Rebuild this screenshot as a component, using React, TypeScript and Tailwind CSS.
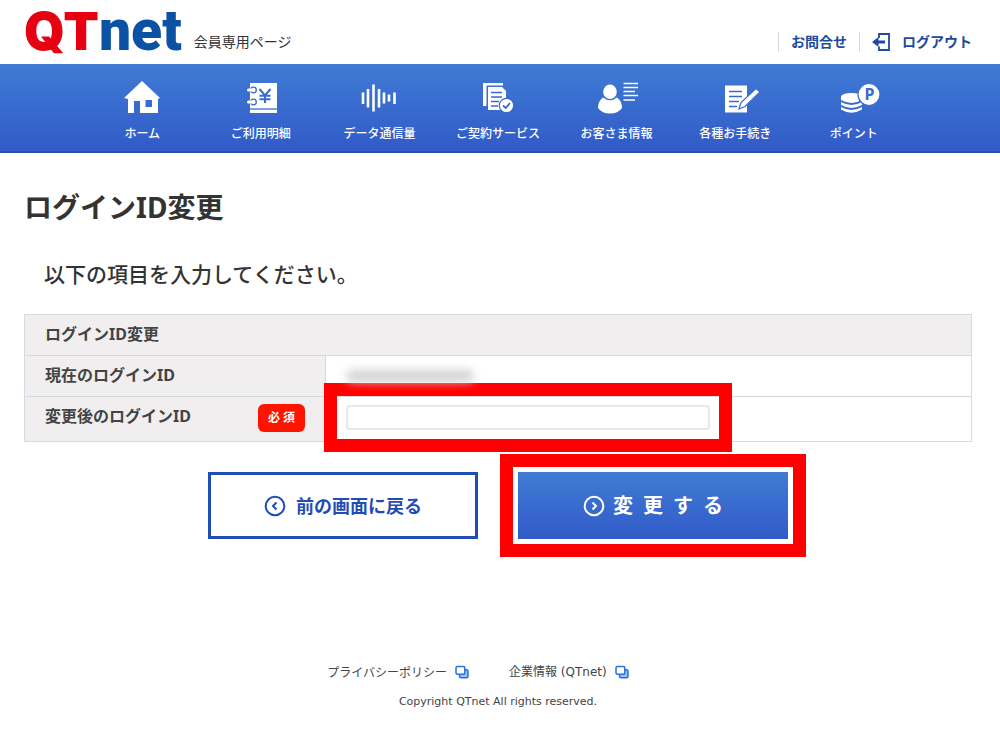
import type { ReactNode } from 'react'

type NavItem = {
    label: string
    icon: ReactNode
}

const navItems: NavItem[] = [
    {
        label: 'ホーム',
        icon: (
            <path
                fillRule="evenodd"
                d="M20 0 L38 17 L36 18 V32 H18 V20 H12 V32 H6 V18 L2 17 Z M23.5 19 V26 H30 V19 Z"
            />
        )
    },
    {
        label: 'ご利用明細',
        icon: (
            <>
                <path d="M9 2 H36 V32 H9 Z" />
                <path d="M9 28 H36" stroke="#7f9fe0" strokeWidth="2" />
                <path
                    d="M18.500 8 L24 14.500 L29.500 8 M24 14.500 V22 M18.500 14.800 H29.500 M18.500 18.300 H29.500"
                    fill="none"
                    stroke="#3b69cc"
                    strokeWidth="2"
                />
                <g stroke="#3b69cc" strokeWidth="1.300">
                    <circle cx="12.500" cy="9" r="2.800" />
                    <circle cx="12.500" cy="21" r="2.800" />
                </g>
                <path
                    d="M12 9 H7.500 M12 21 H7.500"
                    stroke="white"
                    strokeWidth="3"
                    strokeLinecap="round"
                />
            </>
        )
    },
    {
        label: 'データ通信量',
        icon: (
            <path
                d="M4 11.500 V23 M9 8 V26.500 M14.500 3.500 V30.500 M20 8 V26.500 M25 11.500 V22.500 M30 13.500 V20.500 M35.500 11.500 V23"
                stroke="white"
                strokeWidth="2.600"
            />
        )
    },
    {
        label: 'ご契約サービス',
        icon: (
            <>
                <path d="M5 2 H25 V4.500 H8.500 V25 H5 Z" />
                <path d="M10 6 H24 L28 10 V29 H10 Z" />
                <path
                    d="M13 11.500 H24 M13 16 H24 M13 20.500 H21 M13 25 H20"
                    stroke="#3b69cc"
                    strokeWidth="1.500"
                />
                <circle
                    cx="28.500"
                    cy="24.500"
                    r="7.200"
                    stroke="#3a67cb"
                    strokeWidth="1.200"
                />
                <path
                    d="M25 24.500 L27.800 27 L32 22"
                    fill="none"
                    stroke="#3a67cb"
                    strokeWidth="1.800"
                />
            </>
        )
    },
    {
        label: 'お客さま情報',
        icon: (
            <>
                <ellipse cx="13" cy="10.800" rx="6.800" ry="7.200" />
                <path d="M6 16.500 Q13 22 20 16.500 Q25 20 25 27 Q21 32.500 13 32.500 Q5 32.500 1 27 Q1 20 6 16.500 Z" />
                <path
                    d="M26.500 2.500 H41 M26.500 6.500 H41 M26.500 10.500 H38 M26.500 14.500 H41 M26.500 19 H38"
                    stroke="white"
                    strokeWidth="1.700"
                />
            </>
        )
    },
    {
        label: '各種お手続き',
        icon: (
            <>
                <path d="M10 4.500 H32 V31.500 H10 Z" />
                <path
                    d="M14 10.500 H27 M14 15.500 H27 M14 20.500 H24 M14 25.500 H22"
                    stroke="#3b69cc"
                    strokeWidth="1.500"
                />
                <path
                    d="M24 28 L26 21.500 L41 7.500 L45 11 L30 25.500 Z"
                    stroke="#3b69cc"
                    strokeWidth="1.200"
                />
            </>
        )
    },
    {
        label: 'ポイント',
        icon: (
            <>
                <ellipse cx="17.500" cy="15.500" rx="10.500" ry="3.500" />
                <path d="M7 15.500 V19 Q17.500 25 28 19 V15.500 Z" />
                <path d="M7 21 V24 Q17.500 30 28 24 V21 Q17.500 27 7 21 Z" />
                <path d="M7 26 V28.500 Q17.500 35 28 28.500 V26 Q17.500 32 7 26 Z" />
                <circle
                    cx="35"
                    cy="13.500"
                    r="11"
                    stroke="#3d70ce"
                    strokeWidth="1.200"
                />
                <text
                    x="35.500"
                    y="19"
                    textAnchor="middle"
                    fill="#3b69cc"
                    className="font-['Noto_Sans',sans-serif] text-base font-bold"
                >
                    P
                </text>
            </>
        )
    }
]

function LogoutIcon() {
    return (
        <svg viewBox="0 0 18 18" className="h-[18px] w-[18px]" fill="none">
            <path
                d="M7 5 V1 H17 V17 H7 V13.500"
                stroke="#1c4a9c"
                strokeWidth="1.800"
            />
            <path d="M0 9 L6.500 4 V7.500 H13 V10.500 H6.500 V14 Z" fill="#1c4a9c" />
        </svg>
    )
}

function CircleArrow({ direction }: { direction: 'left' | 'right' }) {
    return (
        <svg
            viewBox="0 0 22 22"
            className="h-[22px] w-[22px]"
            fill="none"
            stroke="currentColor"
            strokeWidth="2"
        >
            <circle cx="11" cy="11" r="9.300" />
            <path
                d={direction === 'left' ? 'M12.500 7.500 L9 11 L12.500 14.500' : 'M9.500 7.500 L13 11 L9.500 14.500'}
            />
        </svg>
    )
}

function NewWindowIcon() {
    return (
        <svg
            viewBox="0 0 14 14"
            className="h-3.5 w-3.5"
            stroke="#2a6fd6"
            strokeWidth="1.500"
            fill="white"
        >
            <rect x="4.500" y="4.800" width="8.500" height="8" rx="1.500" fill="#9cc0f2" />
            <rect x="1" y="1.500" width="8.800" height="7.800" rx="1.500" />
        </svg>
    )
}

export default function App() {
    return (
        <div className="min-h-screen bg-white font-['Noto_Sans','Noto_Sans_CJK_JP',sans-serif] text-[#333]">
            <header className="flex items-start justify-between pt-1 pr-7 pl-6">
                <div className="flex h-[60px] items-start gap-3">
                    <a
                        href="#"
                        className="font-['Roboto',sans-serif] text-[57px] leading-[54px] font-black text-[#0b52a5]"
                    >
                        <span className="font-['Inter',sans-serif] text-[52px] text-[#e60012]">
                            QT
                        </span>
                        net
                    </a>
                    <p className="pt-7 text-sm">会員専用ページ</p>
                </div>
                <div className="flex items-center pt-7 text-sm font-bold text-[#1c4a9c]">
                    <a
                        href="#"
                        className="border-x border-[#d5d8df] px-3"
                    >
                        お問合せ
                    </a>
                    <a href="#" className="flex items-center gap-3 pl-3">
                        <LogoutIcon />
                        ログアウト
                    </a>
                </div>
            </header>

            <nav className="border-b-2 border-[#2a4fb4] bg-linear-to-b from-[#407bd4] to-[#325ac8] pr-1">
                <ul className="mx-auto grid max-w-[830px] grid-cols-7 pt-[17px] pb-[9px]">
                    {navItems.map((item) => (
                        <li key={item.label}>
                            <a
                                href="#"
                                className="flex flex-col items-center gap-[13px] text-xs leading-4 font-medium whitespace-nowrap text-white"
                            >
                                <svg
                                    viewBox="0 0 40 32"
                                    className="h-8 w-10 overflow-visible"
                                    fill="white"
                                >
                                    {item.icon}
                                </svg>
                                {item.label}
                            </a>
                        </li>
                    ))}
                </ul>
            </nav>

            <main className="pr-7 pl-6">
                <h1 className="pt-[38px] text-[28px] leading-8 font-bold">
                    ログインID変更
                </h1>
                <p className="mt-[37px] pl-5 text-[21px] leading-7 font-medium">
                    以下の項目を入力してください。
                </p>

                <form>
                    <table className="mt-[26px] w-full table-fixed border-collapse border border-[#d5d9e1] text-left text-base leading-6 text-[#444]">
                        <colgroup>
                            <col className="w-[301px]" />
                            <col />
                        </colgroup>
                        <thead>
                            <tr>
                                <th
                                    colSpan={2}
                                    className="border border-[#d5d9e1] bg-[#f0eeef] px-5 pt-[7px] pb-[9px] font-bold"
                                >
                                    ログインID変更
                                </th>
                            </tr>
                        </thead>
                        <tbody>
                            <tr>
                                <th className="border border-[#d5d9e1] bg-[#f0eeef] px-5 pt-[7px] pb-[9px] font-bold">
                                    現在のログインID
                                </th>
                                <td className="border border-[#d5d9e1] px-5">
                                    <div className="h-3 w-32 rounded-full bg-[#d2d2d2] blur-[5px]" />
                                </td>
                            </tr>
                            <tr>
                                <th className="border border-[#d5d9e1] bg-[#f0eeef] px-5 pt-[7px] pb-[9px] font-bold">
                                    <div className="flex items-start justify-between">
                                        <label htmlFor="new-login-id">
                                            変更後のログインID
                                        </label>
                                        <span className="rounded-md bg-[#ff1400] px-2.5 text-xs leading-7 font-bold text-white">
                                            必 須
                                        </span>
                                    </div>
                                </th>
                                <td className="border border-[#d5d9e1] px-5 pt-2 align-top">
                                    <div className="flex w-[364px] outline-[13px] outline-offset-[9px] outline-[#ff0000]">
                                        <input
                                            id="new-login-id"
                                            type="text"
                                            className="h-[25px] w-full rounded-sm border-2 border-[#e4e7ec] bg-white px-2 text-sm"
                                        />
                                    </div>
                                </td>
                            </tr>
                        </tbody>
                    </table>

                    <div className="mt-[30px] flex justify-center gap-10 text-lg leading-6 font-bold">
                        <button
                            type="button"
                            className="flex h-[67px] w-[270px] items-center justify-center gap-2.5 border-[3px] border-[#1f4db5] text-[#1f4db5]"
                        >
                            <CircleArrow direction="left" />
                            前の画面に戻る
                        </button>
                        <button
                            type="submit"
                            className="flex h-[67px] w-[270px] items-center justify-center gap-2 bg-linear-to-b from-[#407bd4] to-[#325ac8] text-xl text-white outline-[13px] outline-offset-[5px] outline-[#ff0000]"
                        >
                            <CircleArrow direction="right" />
                            変&ensp;更&ensp;す&ensp;る
                        </button>
                    </div>
                </form>
            </main>

            <footer className="mt-[123px] pr-7 pb-6 pl-6 font-['DejaVu_Sans','Noto_Sans_CJK_JP',sans-serif] text-xs text-[#444]">
                <ul className="flex justify-center leading-5">
                    <li className="mr-10">
                        <a href="#" className="flex items-center gap-2">
                            <span className="font-['Noto_Sans_CJK_JP',sans-serif]">
                                プライバシーポリシー
                            </span>
                            <NewWindowIcon />
                        </a>
                    </li>
                    <li className="mr-10">
                        <a href="#" className="flex items-center gap-2">
                            企業情報 (QTnet)
                            <NewWindowIcon />
                        </a>
                    </li>
                </ul>
                <p className="mt-3 text-center text-[11px] leading-4">
                    Copyright QTnet All rights reserved.
                </p>
            </footer>
        </div>
    )
}
